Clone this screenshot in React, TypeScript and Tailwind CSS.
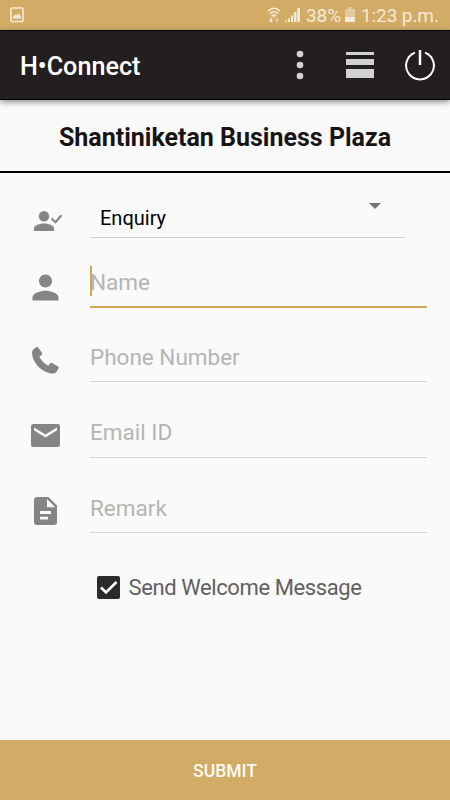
import type { ReactNode } from "react";

const statusIcon = "fill-[#f6ead6]";

function StatusBar() {
  return (
    <div className="flex h-[30px] shrink-0 items-center bg-[#d2ab67] pr-[11px] pl-[10px] text-[#f6ead6]">
      <svg className="h-[16px] w-[14px]" viewBox="0 0 14 16">
        <rect x="1" y="1" width="12" height="13.5" rx="1" fill="none" stroke="#f6ead6" strokeWidth="1.6" />
        <path className={statusIcon} d="M3 11.5V9.5l2-2 1.5 1 2-2 2.5 3v2z" />
      </svg>
      <svg className="ml-auto h-[17px] w-[14px]" viewBox="0 0 14 17">
        <g fill="none" stroke="#f6ead6" strokeWidth="1.5">
          <path d="M.7 4.2Q7-1.6 13.3 4.2" />
          <path d="M2.7 6.7Q7 2.8 11.3 6.7" />
          <path d="M4.6 9Q7 7 9.4 9" />
        </g>
        <path className={statusIcon} d="M5.6 9.6h2.8L7 11.4zM3.2 11h1.6v2h1.6L4 15.6 1.6 13h1.6z" />
        <path className={statusIcon} opacity=".55" d="M9.2 15.4h1.6v-2h1.4L10 11l-2.2 2.4h1.4z" />
      </svg>
      <svg className="ml-[4px] h-[16px] w-[15px]" viewBox="0 0 15 16">
        <path className={statusIcon} d="M0 13.5h2V15H0zM3 11.5h2V15H3zM6 8.5h2.2V15H6zM9 5h2.4v10H9zM12.2 1H15v14h-2.8z" />
      </svg>
      <span className="ml-[6px] w-[35px] pt-[1px] text-[19px] leading-[30px] tracking-[-0.1px] whitespace-nowrap">38%</span>
      <svg className="ml-[4px] h-[16px] w-[10px]" viewBox="0 0 10 16">
        <path className={statusIcon} opacity=".5" d="M3 0h4v2h3v8H0V2h3z" />
        <path className={statusIcon} d="M0 10h10v5H0z" />
      </svg>
      <span className="ml-[6px] w-[78px] pt-[1px] text-[19px] leading-[30px] tracking-[-0.1px] whitespace-nowrap">1:23 p.m.</span>
    </div>
  );
}

function Header() {
  return (
    <header className="z-10 flex h-[70px] shrink-0 items-center border-y border-black bg-[#231f20] pl-[20px] text-white shadow-[0_2px_6px_rgba(0,0,0,0.45)]">
      <h1 className="pt-[3px] text-[25.2px] leading-[30px] font-medium">H•Connect</h1>
      <svg className="ml-auto h-[30px] w-[8px] fill-[#d2d2d2]" viewBox="0 0 8 30">
        <circle cx="4" cy="4" r="3.3" />
        <circle cx="4" cy="15" r="3.3" />
        <circle cx="4" cy="26" r="3.3" />
      </svg>
      <svg className="ml-[42px] h-[28px] w-[28px] fill-[#d2d2d2]" viewBox="0 0 28 28">
        <path d="M0 1h28v3H0zM0 8h28v6H0zM0 18h28v9H0z" />
      </svg>
      <svg className="mr-[14px] ml-[30px] h-[32px] w-[32px]" viewBox="0 0 32 32" fill="none" stroke="white">
        <path d="M11 3.6A13.9 13.9 0 1 0 21 3.6" strokeWidth="2" />
        <path d="M16 1v15" strokeWidth="2.5" />
      </svg>
    </header>
  );
}

function VisitorIcon() {
  return (
    <svg className="mt-[35px] ml-[33px] h-[25px] w-[31px] fill-[#858585]" viewBox="0 0 31 25">
      <circle cx="11" cy="8.2" r="5.2" />
      <path d="M1 23v-2.5C1 17 7 15.5 11 15.5s10 1.5 10 5V23z" />
      <path d="M18.5 10.5l4 3.7 6-7" fill="none" stroke="#858585" strokeWidth="2.2" />
    </svg>
  );
}

function PersonIcon() {
  return (
    <svg className="mt-[30px] ml-[25.5px] h-[39px] w-[39px] fill-[#858585]" viewBox="0 0 24 24">
      <path d="M12 12c2.210 0 4-1.790 4-4s-1.790-4-4-4-4 1.790-4 4 1.790 4 4 4zm0 2c-2.670 0-8 1.340-8 4v2h16v-2c0-2.660-5.330-4-8-4z" />
    </svg>
  );
}

function PhoneIcon() {
  return (
    <svg className="mt-[38px] ml-[31px] h-[29px] w-[29px] fill-[#858585]" viewBox="0 0 29 29">
      <path d="M5.200 1.200Q6.300.4 7.100 1.500L11 6.700Q11.700 7.800 10.700 8.700L8.300 10.700C10.300 14.500 13.500 17.900 17.300 19.700L19 17.300Q19.900 16.200 21.100 17L27 20.400Q28.200 21.200 27.500 22.400L25.300 26.100Q24.300 27.700 22.300 27.500C12 27.400 1.400 17.500 1 6.700Q.8 4.500 2.300 3.400z" />
    </svg>
  );
}

function MailIcon() {
  return (
    <svg className="mt-[42px] ml-[31px] h-[23px] w-[29px] fill-[#858585]" viewBox="0 0 29 23">
      <path
        fillRule="evenodd"
        d="M2.5 0h24A2.5 2.5 0 0 1 29 2.5v18a2.500 2.500 0 0 1-2.500 2.500h-24A2.500 2.500 0 0 1 0 20.500v-18A2.500 2.500 0 0 1 2.500 0zM3 3.500v2.800l11.500 7.200L26 6.300V3.500l-11.500 7z"
      />
    </svg>
  );
}

function NoteIcon() {
  return (
    <svg className="mt-[39px] ml-[34px] h-[28px] w-[23px] fill-[#858585]" viewBox="0 0 23 28">
      <path
        fillRule="evenodd"
        d="M3 0h11.500L23 8.500V25a3 3 0 0 1-3 3H3a3 3 0 0 1-3-3V3a3 3 0 0 1 3-3zM13 2v8.200h8.200zM6 14v3h11v-3zM6 19.800v2.800h8v-2.800z"
      />
    </svg>
  );
}

type FieldProps = {
  icon: ReactNode;
  placeholder: string;
  row: string;
  gap?: string;
  focused?: boolean;
};

function Field({ icon, placeholder, row, gap = "mb-[9px]", focused }: FieldProps) {
  return (
    <div className={`flex ${row}`}>
      <div className="w-[90px] shrink-0">{icon}</div>
      <div className={`flex w-[337px] items-end ${focused ? "border-b-2 border-[#d2a654]" : "border-b border-[#d5d5d5]"}`}>
        <div className={`relative text-[22.5px] leading-[30px] text-[#b5b5b5] ${gap}`}>
          {placeholder}
          {focused && <span className="absolute top-[-1px] left-0 h-[30px] w-[2px] bg-[#d2a654]" />}
        </div>
      </div>
    </div>
  );
}

export default function App() {
  return (
    <div className="flex h-[800px] w-[450px] flex-col overflow-hidden bg-[#fafafa] font-['Roboto',sans-serif]">
      <StatusBar />
      <Header />
      <h2 className="flex h-[73px] shrink-0 items-center justify-center border-b-2 border-black pt-[5px] text-[25px] font-bold text-[#181415]">
        Shantiniketan Business Plaza
      </h2>
      <main className="flex flex-1 flex-col">
        <div className="flex h-[65px]">
          <div className="w-[90px] shrink-0">
            <VisitorIcon />
          </div>
          <div className="flex w-[315px] items-start justify-between border-b border-[#d0d0d0] pr-[24px] pl-[10px]">
            <span className="mt-[30px] text-[20px] leading-[30px] text-black">Enquiry</span>
            <svg className="mt-[30px] h-[6px] w-[12px] fill-[#757575]" viewBox="0 0 12 6">
              <path d="M0 0h12L6 6z" />
            </svg>
          </div>
        </div>
        <Field icon={<PersonIcon />} placeholder="Name" row="h-[70px]" focused />
        <Field icon={<PhoneIcon />} placeholder="Phone Number" row="h-[74px]" />
        <Field icon={<MailIcon />} placeholder="Email ID" row="h-[76px]" gap="mb-[10px]" />
        <Field icon={<NoteIcon />} placeholder="Remark" row="h-[75px]" />
        <label className="mt-[38px] flex items-center pl-[97px]">
          <svg className="h-[23px] w-[23px]" viewBox="0 0 23 23">
            <rect width="23" height="23" rx="2" fill="#2b2b2b" />
            <path d="M4 11.500l5 5L19.500 6" fill="none" stroke="white" strokeWidth="2.600" />
          </svg>
          <span className="ml-[8.5px] pt-[2px] text-[22px] leading-[30px] tracking-[-0.4px] whitespace-nowrap text-[#616161]">
            Send Welcome Message
          </span>
        </label>
      </main>
      <button className="h-[60px] shrink-0 bg-[#d2ab67] pt-[2px] text-[17.5px] font-medium text-[#fffaf0]">SUBMIT</button>
    </div>
  );
}
